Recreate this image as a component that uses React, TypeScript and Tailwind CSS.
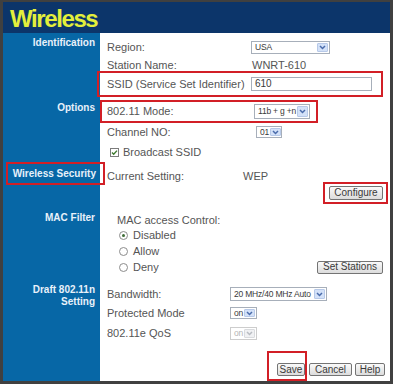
import type { ReactNode } from 'react';

// dropdown arrow box (XP style)
function Arrow({ disabled }: { disabled?: boolean }) {
  return (
    <span
      className={`flex w-[11px] shrink-0 items-center justify-center rounded-[1px] border ${
        disabled ? 'border-[#d9dbde] bg-[#f0f1f3]' : 'border-[#b7c9e8] bg-[#d3e1f8]'
      }`}
    >
      <svg width="7" height="5" viewBox="0 0 7 5">
        <path d="M1 1l2.5 2.5L6 1" fill="none" stroke={disabled ? '#b8bcc2' : '#4a6cab'} strokeWidth="1.5" />
      </svg>
    </span>
  );
}

function Select({ value, className, disabled }: { value: string; className: string; disabled?: boolean }) {
  return (
    <div
      className={`flex items-stretch border bg-white p-[1px] ${
        disabled ? 'border-[#cdcdcd] text-[#b5b5b5]' : 'border-[#a7afba] text-[#3a3a3a]'
      } ${className}`}
    >
      <span className="flex flex-1 items-center pl-[2px] pr-[1px] text-[8.5px] leading-none tracking-[-0.2px] whitespace-nowrap">
        {value}
      </span>
      <Arrow disabled={disabled} />
    </div>
  );
}

function Button({ children, className }: { children: ReactNode; className: string }) {
  return (
    <div
      className={`flex items-center justify-center rounded-[2px] border border-[#747474] bg-gradient-to-b from-[#fafafa] to-[#dcdcdc] text-[10px] leading-none text-[#3a3a3a] ${className}`}
    >
      {children}
    </div>
  );
}

function Radio({ checked }: { checked?: boolean }) {
  return (
    <span className="flex h-[9px] w-[9px] items-center justify-center rounded-full border border-[#8c8c8c] bg-white">
      {checked && <span className="h-[3px] w-[3px] rounded-full bg-[#3f6d36]" />}
    </span>
  );
}

function Section({ label, className, children }: { label: ReactNode; className: string; children: ReactNode }) {
  return (
    <div className={`flex ${className}`}>
      <div className="w-[97px] shrink-0 bg-[#0767a6] text-right text-[10px] font-bold leading-[12px] text-[#e8f1fa]">
        {label}
      </div>
      <div className="flex flex-1 flex-col text-[11px] leading-none text-[#555]">{children}</div>
    </div>
  );
}

export default function App() {
  return (
    <div className="flex h-[384px] w-[393px] flex-col overflow-hidden border-x-[3px] border-t-2 border-b-[3px] border-[#404040] bg-white font-['Liberation_Sans',Arial,sans-serif]">
      <div className="h-[31px] shrink-0 bg-[#0c356a] pl-[7px] pt-[5px]">
        <h1 className="text-[24px] font-bold leading-none tracking-[-1.4px] text-[#e3ef3b]">Wireless</h1>
      </div>

      {/* Identification */}
      <Section className="h-[65px]" label={<div className="pr-[5px] pt-[4px]">Identification</div>}>
        <div className="pt-[7px]">
          <div className="flex h-[15px] items-center pl-[7px]">
            <span className="w-[144px]">Region:</span>
            <Select value="USA" className="h-[13px] w-[79px]" />
          </div>
          <div className="mt-[3px] flex h-[14px] items-center pl-[7px]">
            <span className="w-[145px]">Station Name:</span>
            <span>WNRT-610</span>
          </div>
          <div className="-ml-[3px] -mt-[1px] flex h-[26px] w-[286px] items-center border-2 border-[#d21f26] pl-[8px]">
            <span className="w-[144px]">SSID (Service Set Identifier)</span>
            <div className="flex h-[14px] w-[121px] items-center border border-[#a7afba] pl-[3px] text-[10px] text-[#3a3a3a]">
              610
            </div>
          </div>
        </div>
      </Section>

      {/* Options */}
      <Section className="h-[62px]" label={<div className="pr-[5px] pt-[4px]">Options</div>}>
        <div className="pt-[2px]">
          <div className="flex h-[23px] w-[218px] items-center border-2 border-[#d21f26] pl-[5px]">
            <span className="w-[147px]">802.11 Mode:</span>
            <Select value="11b + g +n" className="h-[15px] w-[56px]" />
          </div>
          <div className="mt-[2px] flex h-[14px] items-center pl-[7px]">
            <span className="w-[149px]">Channel NO:</span>
            <Select value="01" className="h-[12px] w-[26px]" />
          </div>
          <div className="mt-[6px] flex h-[14px] items-center gap-[4px] pl-[10px]">
            <span className="flex h-[9px] w-[9px] items-center justify-center border border-[#7c7c7c] bg-white">
              <svg width="7" height="7" viewBox="0 0 7 7">
                <path d="M1 3.5l1.7 1.7L6 1.6" fill="none" stroke="#3d7a2e" strokeWidth="1.4" />
              </svg>
            </span>
            <span>Broadcast SSID</span>
          </div>
        </div>
      </Section>

      {/* Wireless Security */}
      <Section
        className="h-[46px]"
        label={
          <div className="pl-[3px] pt-[2px]">
            <div className="flex h-[23px] w-[99px] items-center justify-end border-2 border-[#d21f26] pr-[7px]">
              Wireless Security
            </div>
          </div>
        }
      >
        <div className="pt-[9px]">
          <div className="flex h-[14px] items-center pl-[7px]">
            <span className="w-[136px]">Current Setting:</span>
            <span>WEP</span>
          </div>
          <div className="-mt-[1px] flex justify-end pr-[2px]">
            <div className="flex h-[22px] w-[65px] items-center border-2 border-[#d21f26] pl-[4px]">
              <Button className="h-[14px] w-[54px]">Configure</Button>
            </div>
          </div>
        </div>
      </Section>

      {/* MAC Filter */}
      <Section className="h-[74px]" label={<div className="pr-[5px] pt-[6px]">MAC Filter</div>}>
        <div className="pt-[7px]">
          <div className="flex h-[14px] items-center pl-[17px]">MAC access Control:</div>
          <div className="mt-[1px] flex h-[14px] items-center gap-[5px] pl-[19px]">
            <Radio checked />
            <span>Disabled</span>
          </div>
          <div className="mt-[2px] flex h-[14px] items-center gap-[5px] pl-[19px]">
            <Radio />
            <span>Allow</span>
          </div>
          <div className="mt-[2px] flex h-[14px] items-center pl-[19px] pr-[7px]">
            <Radio />
            <span className="ml-[5px] flex-1">Deny</span>
            <Button className="h-[13px] w-[66px]">Set Stations</Button>
          </div>
        </div>
      </Section>

      {/* Draft 802.11n */}
      <Section
        className="h-[64px]"
        label={
          <div className="pr-[5px] pt-[4px]">
            Draft 802.11n
            <br />
            Setting
          </div>
        }
      >
        <div className="pt-[7px]">
          <div className="flex h-[14px] items-center pl-[7px]">
            <span className="w-[123px]">Bandwidth:</span>
            <Select value="20 MHz/40 MHz Auto" className="h-[14px] w-[97px]" />
          </div>
          <div className="mt-[5px] flex h-[14px] items-center pl-[7px]">
            <span className="w-[123px]">Protected Mode</span>
            <Select value="on" className="h-[12px] w-[27px]" />
          </div>
          <div className="mt-[6px] flex h-[14px] items-center pl-[7px]">
            <span className="w-[123px]">802.11e QoS</span>
            <Select value="on" disabled className="h-[13px] w-[27px]" />
          </div>
        </div>
      </Section>

      {/* Buttons */}
      <Section className="h-[37px]" label={null}>
        <div className="flex h-full items-end justify-end pr-[5px]">
          <div className="flex h-[30px] w-[40px] items-end justify-end border-2 border-[#d21f26] pb-[3px]">
            <Button className="h-[13px] w-[28px]">Save</Button>
          </div>
          <Button className="mb-[5px] ml-[2px] h-[13px] w-[43px]">Cancel</Button>
          <Button className="mb-[5px] ml-[3px] h-[13px] w-[30px]">Help</Button>
        </div>
      </Section>
    </div>
  );
}
